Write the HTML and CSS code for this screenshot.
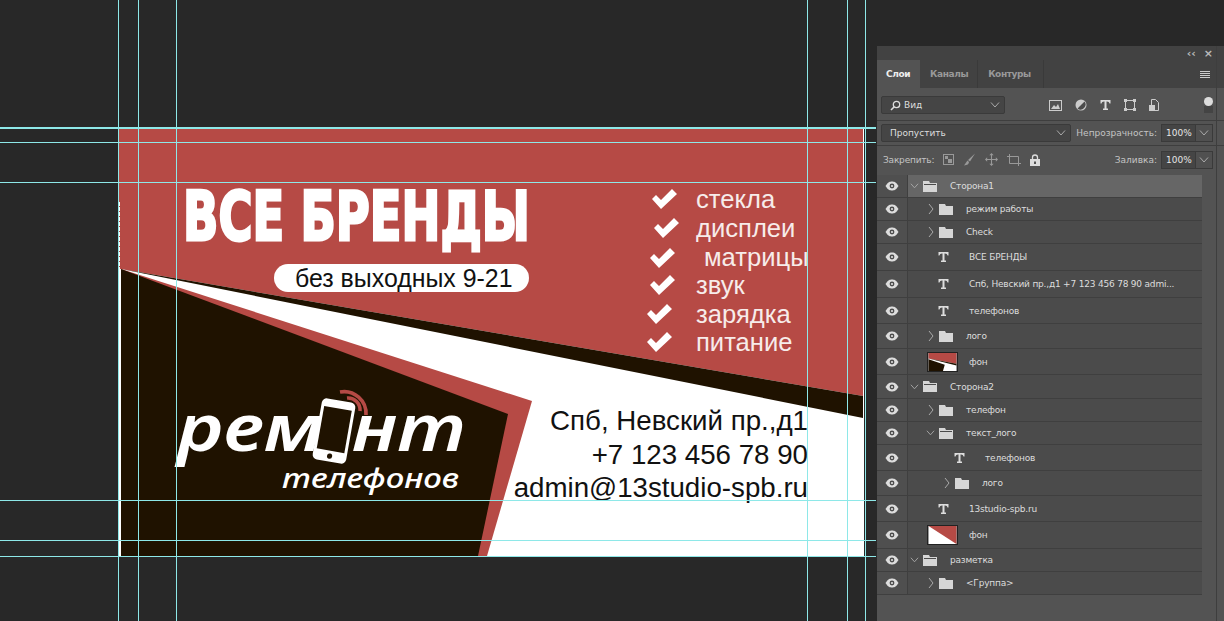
FILE: index.html
```html
<!DOCTYPE html>
<html lang="ru">
<head>
<title>Визитка</title>
<meta charset="utf-8">
<link rel="stylesheet" href="styles.css">
</head>
<body>

<svg width="0" height="0" class="defs">
	<symbol id="eye" viewBox="0 0 14 10"><path d="M0.5 5C3 1 5 0.5 7 0.5S11 1 13.5 5C11 9 9 9.5 7 9.5S3 9 0.5 5Z" fill="#ddd"/><circle cx="7" cy="5" r="2.4" fill="#4b4b4b"/><circle cx="7" cy="5" r="1.1" fill="#ddd"/></symbol>
	<symbol id="folder" viewBox="0 0 14 11"><path d="M0 0H6L7 2H14V11H0Z" fill="#d6d6d6"/></symbol>
	<symbol id="folder-open" viewBox="0 0 14 11"><path d="M0 0H6L7 2H14V11H0Z" fill="#d6d6d6"/><path d="M1 3H13V4H1Z" fill="#4b4b4b"/></symbol>
	<symbol id="type" viewBox="0 0 11 10"><path d="M0.5 0H10.5V3.4H9.5Q9.3 1.4 7 1.4H6.5V8.6H8V10H3V8.6H4.5V1.4H4Q1.7 1.4 1.5 3.4H0.5Z" fill="#ddd"/></symbol>
	<symbol id="right" viewBox="0 0 6 12"><path d="M1 1L5 6L1 11" fill="none" stroke="#aaa" stroke-width="1"/></symbol>
	<symbol id="down" viewBox="0 0 10 6"><path d="M1 0.5L5 5L9 0.5" fill="none" stroke="#aaa" stroke-width="1"/></symbol>
	<symbol id="check" viewBox="0 0 26 20"><path d="M1 10L5 6L10 11L21 0L26 5L10 20Z" fill="#fff"/></symbol>
</svg>

<!-- макет визитки -->
<div class="card">
	<svg class="card-bg" viewBox="0 0 746 429" width="746" height="429">
		<rect x="0" y="0" width="745" height="429" fill="#fff"/>
		<path d="M-1 0H744V269L2 142H-1Z" fill="#b64a45"/>
		<path d="M2 142L744 269V291Z" fill="#1f1200"/>
		<path d="M2 142L413 274L368 429H2Z" fill="#b64a45"/>
		<path d="M2 142L389 287L359 429H2Z" fill="#1f1200"/>
		<path d="M0 75V429" stroke="#fff" stroke-width="2" stroke-dasharray="4 1"/>
	</svg>

	<h1 class="brand">ВСЕ БРЕНДЫ</h1>
	<div class="pill">без выходных 9-21</div>

	<svg class="mark mark1"><use href="#check"/></svg><span class="item item1">стекла</span>
	<svg class="mark mark2"><use href="#check"/></svg><span class="item item2">дисплеи</span>
	<svg class="mark mark3"><use href="#check"/></svg><span class="item item3">матрицы</span>
	<svg class="mark mark4"><use href="#check"/></svg><span class="item item4">звук</span>
	<svg class="mark mark5"><use href="#check"/></svg><span class="item item5">зарядка</span>
	<svg class="mark mark6"><use href="#check"/></svg><span class="item item6">питание</span>

	<div class="contacts">
		<div class="addr">Спб, Невский пр.,д1</div>
		<div class="phone">+7 123 456 78 90</div>
		<div class="mail">admin@13studio-spb.ru</div>
	</div>

	<div class="logo-a">рем</div>
	<svg class="phone-icon" viewBox="0 0 66 90" width="66" height="90">
		<path d="M30 12A22 22 0 0 1 56 35M37 18A12 12 0 0 1 50 31" fill="none" stroke="#b64a45" stroke-width="3.6"/>
		<g transform="rotate(10 24 51)">
			<rect x="7" y="20" width="34" height="62" rx="5" fill="#fff"/>
			<rect x="10" y="28" width="28" height="43" fill="#1f1200"/>
			<circle cx="24" cy="76.500" r="2.600" fill="#1f1200"/>
		</g>
	</svg>
	<div class="logo-b">нт</div>
	<div class="logo-c">телефонов</div>
</div>

<!-- направляющие -->
<i class="guide gv gv1"></i><i class="guide gv gv2"></i><i class="guide gv gv3"></i>
<i class="guide gv gv4"></i><i class="guide gv gv5"></i><i class="guide gv gv6"></i>
<i class="guide gh gh1"></i><i class="guide gh gh2"></i><i class="guide gh gh3"></i>
<i class="guide gh gh4"></i><i class="guide gh gh5"></i><i class="guide gh gh6"></i>

<div class="panel">
	<div class="panel-top"><span class="collapse">‹‹</span><span class="close">×</span></div>
	<div class="tabs">
		<span class="tab active">Слои</span>
		<span class="tab">Каналы</span>
		<span class="tab">Контуры</span>
		<span class="menu"><b></b><b></b><b></b><b></b></span>
	</div>

	<div class="bar bar-filter">
		<div class="select select-kind">
			<svg width="11" height="11" viewBox="0 0 11 11"><circle cx="6.5" cy="4.5" r="3.2" fill="none" stroke="#ddd" stroke-width="1.3"/><path d="M4 7L1 10" stroke="#ddd" stroke-width="1.6"/></svg>
			<span>Вид</span>
			<svg class="arrow"><use href="#down"/></svg>
		</div>
		<div class="filters">
			<svg width="13" height="11" viewBox="0 0 13 11"><rect x="0.5" y="0.5" width="12" height="10" fill="none" stroke="#ccc"/><path d="M2 9L5 5L7 7L9 4L11 9Z" fill="#ccc"/></svg>
			<svg width="12" height="12" viewBox="0 0 12 12"><circle cx="6" cy="6" r="5.500" fill="#ccc"/><path d="M2.500 9.500A5 5 0 0 0 9.500 2.500Z" fill="#4b4b4b"/></svg>
			<svg width="11" height="10"><use href="#type"/></svg>
			<svg width="12" height="12" viewBox="0 0 12 12"><rect x="1.5" y="1.5" width="9" height="9" fill="none" stroke="#ccc"/><path d="M0 0H3V3H0ZM9 0H12V3H9ZM0 9H3V12H0ZM9 9H12V12H9Z" fill="#ccc"/></svg>
			<svg width="10" height="12" viewBox="0 0 10 12"><path d="M2.5 0.5H6.5L9.5 3.5V11.5H2.5Z" fill="none" stroke="#ccc"/><rect x="0" y="6" width="6" height="6" fill="#ccc"/></svg>
		</div>
		<div class="toggle"><i></i><i></i></div>
	</div>

	<div class="bar bar-blend">
		<div class="select select-blend"><span>Пропустить</span><svg class="arrow"><use href="#down"/></svg></div>
		<span class="label">Непрозрачность:</span>
		<div class="percent"><span>100%</span><span class="percent-btn"><svg class="arrow"><use href="#down"/></svg></span></div>
	</div>

	<div class="bar bar-lock">
		<span class="label label-lock">Закрепить:</span>
		<div class="locks">
			<svg width="11" height="11" viewBox="0 0 11 11"><rect x="0.5" y="0.5" width="10" height="10" fill="none" stroke="#999"/><path d="M2 2H5V5H2ZM5 5H9V9H5Z" fill="#999"/></svg>
			<svg width="13" height="13" viewBox="0 0 13 13"><path d="M12 0.500L5 7L7 8.500ZM4.500 7.500L1 12.500Q6 12 6 9Z" fill="#999"/></svg>
			<svg width="13" height="13" viewBox="0 0 12 12"><path d="M6 0L8 2H6.500V5.500H10V4L12 6L10 8V6.500H6.500V10H8L6 12L4 10H5.500V6.500H2V8L0 6L2 4V5.500H5.500V2H4Z" fill="#999"/></svg>
			<svg width="14" height="12" viewBox="0 0 14 12"><path d="M2.500 0V9.500H14M0 2.500H11.500V12" fill="none" stroke="#999"/></svg>
			<svg width="10" height="12" viewBox="0 0 10 12"><path d="M2.500 5V3.500A2.500 2.500 0 0 1 7.500 3.500V5" fill="none" stroke="#ddd" stroke-width="1.300"/><path d="M0 5H10V12H0ZM4 7.500V10H6V7.500Z" fill="#ddd" fill-rule="evenodd"/></svg>
		</div>
		<span class="label label-fill">Заливка:</span>
		<div class="percent"><span>100%</span><span class="percent-btn"><svg class="arrow"><use href="#down"/></svg></span></div>
	</div>

	<div class="layers">
		<div class="row selected"><span class="eye"><svg><use href="#eye"/></svg></span><svg class="tw ind0"><use href="#down"/></svg><svg class="fold"><use href="#folder-open"/></svg><span class="name">Сторона1</span></div>
		<div class="row"><span class="eye"><svg><use href="#eye"/></svg></span><svg class="tw-r ind1"><use href="#right"/></svg><svg class="fold"><use href="#folder"/></svg><span class="name">режим работы</span></div>
		<div class="row"><span class="eye"><svg><use href="#eye"/></svg></span><svg class="tw-r ind1"><use href="#right"/></svg><svg class="fold"><use href="#folder"/></svg><span class="name">Check</span></div>
		<div class="row h27"><span class="eye"><svg><use href="#eye"/></svg></span><svg class="t ind-t1"><use href="#type"/></svg><span class="name name-t">ВСЕ БРЕНДЫ</span></div>
		<div class="row h27"><span class="eye"><svg><use href="#eye"/></svg></span><svg class="t ind-t1"><use href="#type"/></svg><span class="name name-t">Спб, Невский пр.,д1 +7 123 456 78 90 admi...</span></div>
		<div class="row h26"><span class="eye"><svg><use href="#eye"/></svg></span><svg class="t ind-t1"><use href="#type"/></svg><span class="name name-t">телефонов</span></div>
		<div class="row h25"><span class="eye"><svg><use href="#eye"/></svg></span><svg class="tw-r ind1"><use href="#right"/></svg><svg class="fold"><use href="#folder"/></svg><span class="name">лого</span></div>
		<div class="row h26"><span class="eye"><svg><use href="#eye"/></svg></span>
			<svg class="thumb" viewBox="0 0 31 20"><rect width="31" height="20" fill="#fff"/><path d="M0 0H31V12L0 6Z" fill="#b64a45"/><path d="M0 6L31 12V14Z" fill="#1f1200"/><path d="M0 7L18 13L16 20H0Z" fill="#1f1200"/></svg>
			<span class="name name-thumb">фон</span></div>
		<div class="row h24"><span class="eye"><svg><use href="#eye"/></svg></span><svg class="tw ind0"><use href="#down"/></svg><svg class="fold"><use href="#folder-open"/></svg><span class="name">Сторона2</span></div>
		<div class="row"><span class="eye"><svg><use href="#eye"/></svg></span><svg class="tw-r ind1"><use href="#right"/></svg><svg class="fold"><use href="#folder"/></svg><span class="name">телефон</span></div>
		<div class="row"><span class="eye"><svg><use href="#eye"/></svg></span><svg class="tw ind1b"><use href="#down"/></svg><svg class="fold"><use href="#folder-open"/></svg><span class="name">текст_лого</span></div>
		<div class="row h26"><span class="eye"><svg><use href="#eye"/></svg></span><svg class="t ind-t2"><use href="#type"/></svg><span class="name name-t">телефонов</span></div>
		<div class="row h25"><span class="eye"><svg><use href="#eye"/></svg></span><svg class="tw-r ind2"><use href="#right"/></svg><svg class="fold"><use href="#folder"/></svg><span class="name">лого</span></div>
		<div class="row h26"><span class="eye"><svg><use href="#eye"/></svg></span><svg class="t ind-t1"><use href="#type"/></svg><span class="name name-t">13studio-spb.ru</span></div>
		<div class="row h27"><span class="eye"><svg><use href="#eye"/></svg></span>
			<svg class="thumb" viewBox="0 0 31 20"><rect width="31" height="20" fill="#fff"/><path d="M0 0H31V20Z" fill="#b64a45"/></svg>
			<span class="name name-thumb">фон</span></div>
		<div class="row"><span class="eye"><svg><use href="#eye"/></svg></span><svg class="tw ind0"><use href="#down"/></svg><svg class="fold"><use href="#folder-open"/></svg><span class="name">разметка</span></div>
		<div class="row"><span class="eye"><svg><use href="#eye"/></svg></span><svg class="tw-r ind1"><use href="#right"/></svg><svg class="fold"><use href="#folder"/></svg><span class="name">&lt;Группа&gt;</span></div>
	</div>
</div>

</body>
</html>
```

FILE: styles.css
```css
html, body { margin: 0; height: 100%; }

body {
	position: relative;
	width: 1224px;
	height: 621px;
	overflow: hidden;
	background: #282828;
	font-family: "DejaVu Sans", sans-serif;
}

.defs { position: absolute; }

/* card is a free canvas, everything inside is placed by hand */
.card {
	position: absolute;
	left: 119px;
	top: 127px;
	width: 746px;
	height: 429px;
	font-family: "Liberation Sans", Arial, sans-serif;
}

.card-bg { display: block; overflow: visible; }

.brand {
	position: absolute;
	left: 64px;
	top: 51px;
	margin: 0;
	color: #fff;
	font-family: "DejaVu Sans", sans-serif;
	font-size: 68px;
	font-weight: bold;
	line-height: 78px;
	white-space: nowrap;
	transform: scaleX(0.683);
	transform-origin: left;
	-webkit-text-stroke: 3px #fff;
}

.pill {
	position: absolute;
	left: 155px;
	top: 137px;
	width: 255px;
	height: 28px;
	border-radius: 14px;
	background: #fff;
	color: #111;
	font-size: 24.900px;
	line-height: 28px;
	padding-left: 21px;
	box-sizing: border-box;
	white-space: nowrap;
}

.item {
	position: absolute;
	left: 577px;
	color: #f7ecea;
	font-size: 25.600px;
	line-height: 30px;
	white-space: nowrap;
}
.item1 { top: 57px; }
.item2 { top: 86px; }
.item3 { top: 115px; left: 585px; }
.item4 { top: 143px; }
.item5 { top: 172px; }
.item6 { top: 200px; }

.mark { position: absolute; width: 26px; height: 20px; }
.mark1 { left: 532px; top: 62px; }
.mark2 { left: 534px; top: 91px; }
.mark3 { left: 530px; top: 121px; }
.mark4 { left: 530px; top: 148px; }
.mark5 { left: 527px; top: 177px; }
.mark6 { left: 527px; top: 205px; }

.contacts {
	position: absolute;
	right: 57px;
	top: 277px;
	text-align: right;
	color: #111;
	font-size: 27.700px;
	line-height: 33.500px;
	white-space: nowrap;
}

.logo-a, .logo-b, .logo-c {
	position: absolute;
	color: #fff;
	font-family: "Noto Sans", sans-serif;
	font-style: italic;
	font-weight: 600;
	white-space: nowrap;
	transform-origin: left;
}
.logo-a { left: 58px; top: 270px; font-size: 66px; line-height: 56px; transform: scaleX(1.19); }
.logo-b { left: 233px; top: 270px; font-size: 66px; line-height: 56px; transform: scaleX(1.18); }
.logo-c { left: 163px; top: 334px; font-size: 28px; line-height: 32px; font-weight: 500; transform: scaleX(1.18); }
.phone-icon { position: absolute; left: 191px; top: 253px; }

/* guides run across the whole document */
.guide { position: absolute; background: #8ee8e8; }
.gv { top: 0; width: 1px; height: 621px; }
.gh { left: 0; height: 1px; width: 876px; }
.gv1 { left: 118px; }
.gv2 { left: 138px; }
.gv3 { left: 176px; }
.gv4 { left: 807px; }
.gv5 { left: 847px; }
.gv6 { left: 865px; }
.gh1 { top: 127px; height: 2px; }
.gh2 { top: 142px; }
.gh3 { top: 182px; }
.gh4 { top: 500px; }
.gh5 { top: 540px; }
.gh6 { top: 556px; }

/* layers panel */
.panel {
	position: absolute;
	left: 877px;
	top: 46px;
	width: 347px;
	height: 575px;
	background: #535353;
	color: #ddd;
	font-size: 9px;
}

.panel::after {
	content: "";
	position: absolute;
	left: 339px;
	top: 0;
	bottom: 0;
	width: 1px;
	background: #3e3e3e;
}

.panel-top {
	display: flex;
	justify-content: flex-end;
	align-items: center;
	gap: 8px;
	height: 14px;
	padding-right: 11px;
	background: #424242;
	color: #bbb;
	font-size: 11px;
	font-weight: bold;
}

.tabs {
	display: flex;
	align-items: stretch;
	height: 28px;
	background: #424242;
	font-weight: bold;
	color: #999;
	letter-spacing: -0.4px;
}

.tab {
	display: flex;
	align-items: center;
	padding: 0 10px 0 9px;
	border-right: 1px solid #3a3a3a;
}

.tab:nth-child(2) { padding: 0 9px 0 10px; }
.tab:nth-child(3) { padding: 0 12px 0 10px; }

.tab.active { background: #535353; color: #eee; border-right: 0; }

.menu {
	display: flex;
	flex-direction: column;
	gap: 1px;
	margin: auto 14px auto auto;
}
.menu b { display: block; width: 10px; height: 1px; background: #ccc; }

.bar {
	display: flex;
	align-items: center;
	border-bottom: 1px solid #3e3e3e;
	padding-left: 4px;
	padding-right: 11px;
}

.bar-filter { height: 30px; padding-top: 2px; }
.bar-blend { height: 24px; }
.bar-lock { height: 27px; border-bottom: 0; padding-left: 6px; }

.select {
	display: flex;
	align-items: center;
	height: 18px;
	box-sizing: border-box;
	padding: 0 4px 0 8px;
	gap: 3px;
	background: #454545;
	border: 1px solid #3a3a3a;
	border-radius: 2px;
}

.select-kind { width: 124px; }
.select-blend { width: 190px; }

.arrow { width: 10px; height: 6px; margin-left: auto; flex: none; }

.filters {
	display: flex;
	align-items: center;
	gap: 13px;
	margin-left: 44px;
}

.toggle { margin-left: auto; }
.toggle i { display: block; width: 9px; height: 9px; border-radius: 5px; background: #ddd; }
.toggle i + i { background: #444; border-radius: 0; height: 7px; }

.label { color: #c4c4c4; margin-left: 7px; white-space: nowrap; }
.label-lock { margin-left: 0; letter-spacing: -0.2px; }

.percent {
	display: flex;
	align-items: center;
	margin-left: 4px;
	width: 52px;
	height: 18px;
	background: #454545;
	border: 1px solid #3a3a3a;
	box-sizing: border-box;
	padding-left: 4px;
	color: #e6e6e6;
}

.percent-btn {
	display: flex;
	align-items: center;
	justify-content: center;
	align-self: stretch;
	margin-left: auto;
	width: 16px;
	background: #505050;
	border-left: 1px solid #3a3a3a;
}
.percent-btn .arrow { margin: 0; }

.locks {
	display: flex;
	align-items: center;
	gap: 9px;
	margin-left: 9px;
}

.label-fill { margin-left: auto; }
.bar-blend .label { margin-left: auto; }

/* rows */
.layers {
	width: 325px;
	margin-top: 2px;
	letter-spacing: -0.2px;
}

.row {
	display: flex;
	align-items: center;
	height: 23px;
	box-sizing: border-box;
	background: #4b4b4b;
	border-bottom: 1px solid #3f3f3f;
	white-space: nowrap;
}
.h24 { height: 24px; }
.h25 { height: 25px; }
.h26 { height: 26px; }
.h27 { height: 27px; }

.row.selected { background: #666; }

.eye {
	display: flex;
	align-items: center;
	justify-content: center;
	flex: none;
	width: 30px;
	height: 100%;
	border-right: 1px solid #3f3f3f;
	background: #4f4f4f;
}
.eye svg { width: 14px; height: 10px; }

.tw { width: 9px; height: 6px; flex: none; }
.tw-r { width: 6px; height: 12px; flex: none; }
.fold { width: 14px; height: 11px; flex: none; margin-right: 13px; }
.t { width: 11px; height: 10px; flex: none; }
.thumb { width: 31px; height: 20px; flex: none; margin-left: 19px; border: 1px solid #222; box-sizing: border-box; }

.ind0 { margin: 0 4px 0 2px; }
.ind1 { margin: 0 5px 0 20px; }
.ind1b { margin: 0 4px 0 18px; }
.ind2 { margin: 0 5px 0 36px; }
.ind-t1 { margin-left: 30px; }
.ind-t2 { margin-left: 46px; }

.name-t { margin-left: 20px; }
.name-thumb { margin-left: 11px; }
```
